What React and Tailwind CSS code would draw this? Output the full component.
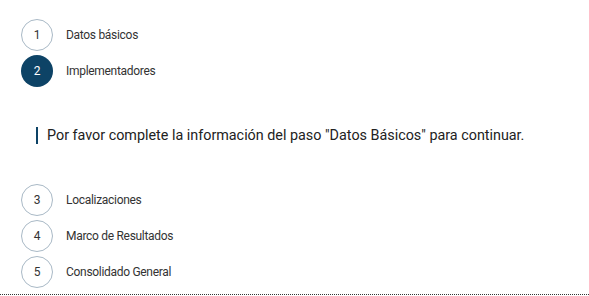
const steps = [
  { n: 1, label: "Datos básicos" },
  { n: 2, label: "Implementadores", active: true },
];

const laterSteps = [
  { n: 3, label: "Localizaciones" },
  { n: 4, label: "Marco de Resultados" },
  { n: 5, label: "Consolidado General" },
];

function Step({ n, label, active }) {
  return (
    <div className="flex items-center h-8">
      <div
        className={`w-8 h-8 rounded-full flex items-center justify-center text-[12px] ${
          active ? "bg-[#0d4366] text-white" : "border border-[#a9b9c6] text-[#333]"
        }`}
      >
        {n}
      </div>
      <span className="ml-[13px] text-[12px] tracking-[-0.3px] text-[#333]">{label}</span>
    </div>
  );
}

export default function App() {
  return (
    <div className="w-[589px] h-[296px] bg-white font-['Roboto',sans-serif] overflow-hidden">
      <div className="pl-[21px] pt-[19px] flex flex-col gap-1">
        {steps.map((s) => (
          <Step key={s.n} {...s} />
        ))}
      </div>
      <div className="h-[97px] flex items-center pl-9">
        <div className="border-l-2 border-[#0d4366] pl-[9px] text-[14.35px] leading-[17px] text-[#222]">
          Por favor complete la información del paso "Datos Básicos" para continuar.
        </div>
      </div>
      <div className="pl-[21px] flex flex-col gap-1 pb-[6px] border-b border-dotted border-[#333]">
        {laterSteps.map((s) => (
          <Step key={s.n} {...s} />
        ))}
      </div>
    </div>
  );
}
